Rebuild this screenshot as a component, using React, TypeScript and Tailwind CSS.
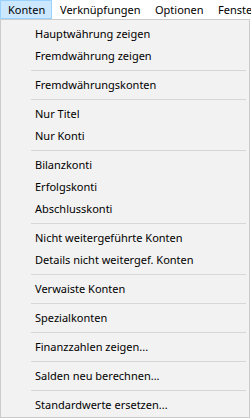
import React from 'react';

type Entry = { label: string } | { sep: true };

const entries: Entry[] = [
  { label: 'Hauptwährung zeigen' },
  { label: 'Fremdwährung zeigen' },
  { sep: true },
  { label: 'Fremdwährungskonten' },
  { sep: true },
  { label: 'Nur Titel' },
  { label: 'Nur Konti' },
  { sep: true },
  { label: 'Bilanzkonti' },
  { label: 'Erfolgskonti' },
  { label: 'Abschlusskonti' },
  { sep: true },
  { label: 'Nicht weitergeführte Konten' },
  { label: 'Details nicht weitergef. Konten' },
  { sep: true },
  { label: 'Verwaiste Konten' },
  { sep: true },
  { label: 'Spezialkonten' },
  { sep: true },
  { label: 'Finanzzahlen zeigen...' },
  { sep: true },
  { label: 'Salden neu berechnen...' },
  { sep: true },
  { label: 'Standardwerte ersetzen...' },
];

export default function App() {
  return (
    <div
      className="w-[251px] h-[418px] bg-white text-[11px] text-black overflow-hidden"
      style={{ fontFamily: '"Noto Sans", "Segoe UI", sans-serif' }}
    >
      {/* Menu bar */}
      <div className="flex h-[19px] items-stretch bg-white leading-[17px] whitespace-nowrap">
        <div className="w-[52px] shrink-0 border border-[#99d1ff] bg-[#cce8ff] pl-[7px]">Konten</div>
        <div className="w-[94px] shrink-0 pl-[8px] pt-px">Verknüpfungen</div>
        <div className="w-[65px] shrink-0 pl-[9px] pt-px">Optionen</div>
        <div className="pl-[7px] pt-px">Fenster</div>
      </div>

      {/* Dropdown */}
      <div className="w-[250px] border border-[#cccccc] bg-[#f2f2f2] pt-[3px] pb-[1px]">
        {entries.map((e, i) =>
          'sep' in e ? (
            <div key={i} className="flex h-[7px] items-center pl-[30px] pr-[3px]">
              <div className="h-px w-full bg-[#d7d7d7]" />
            </div>
          ) : (
            <div key={i} className="flex h-[22px] items-center pl-[34px] whitespace-nowrap">
              {e.label}
            </div>
          )
        )}
      </div>
    </div>
  );
}
